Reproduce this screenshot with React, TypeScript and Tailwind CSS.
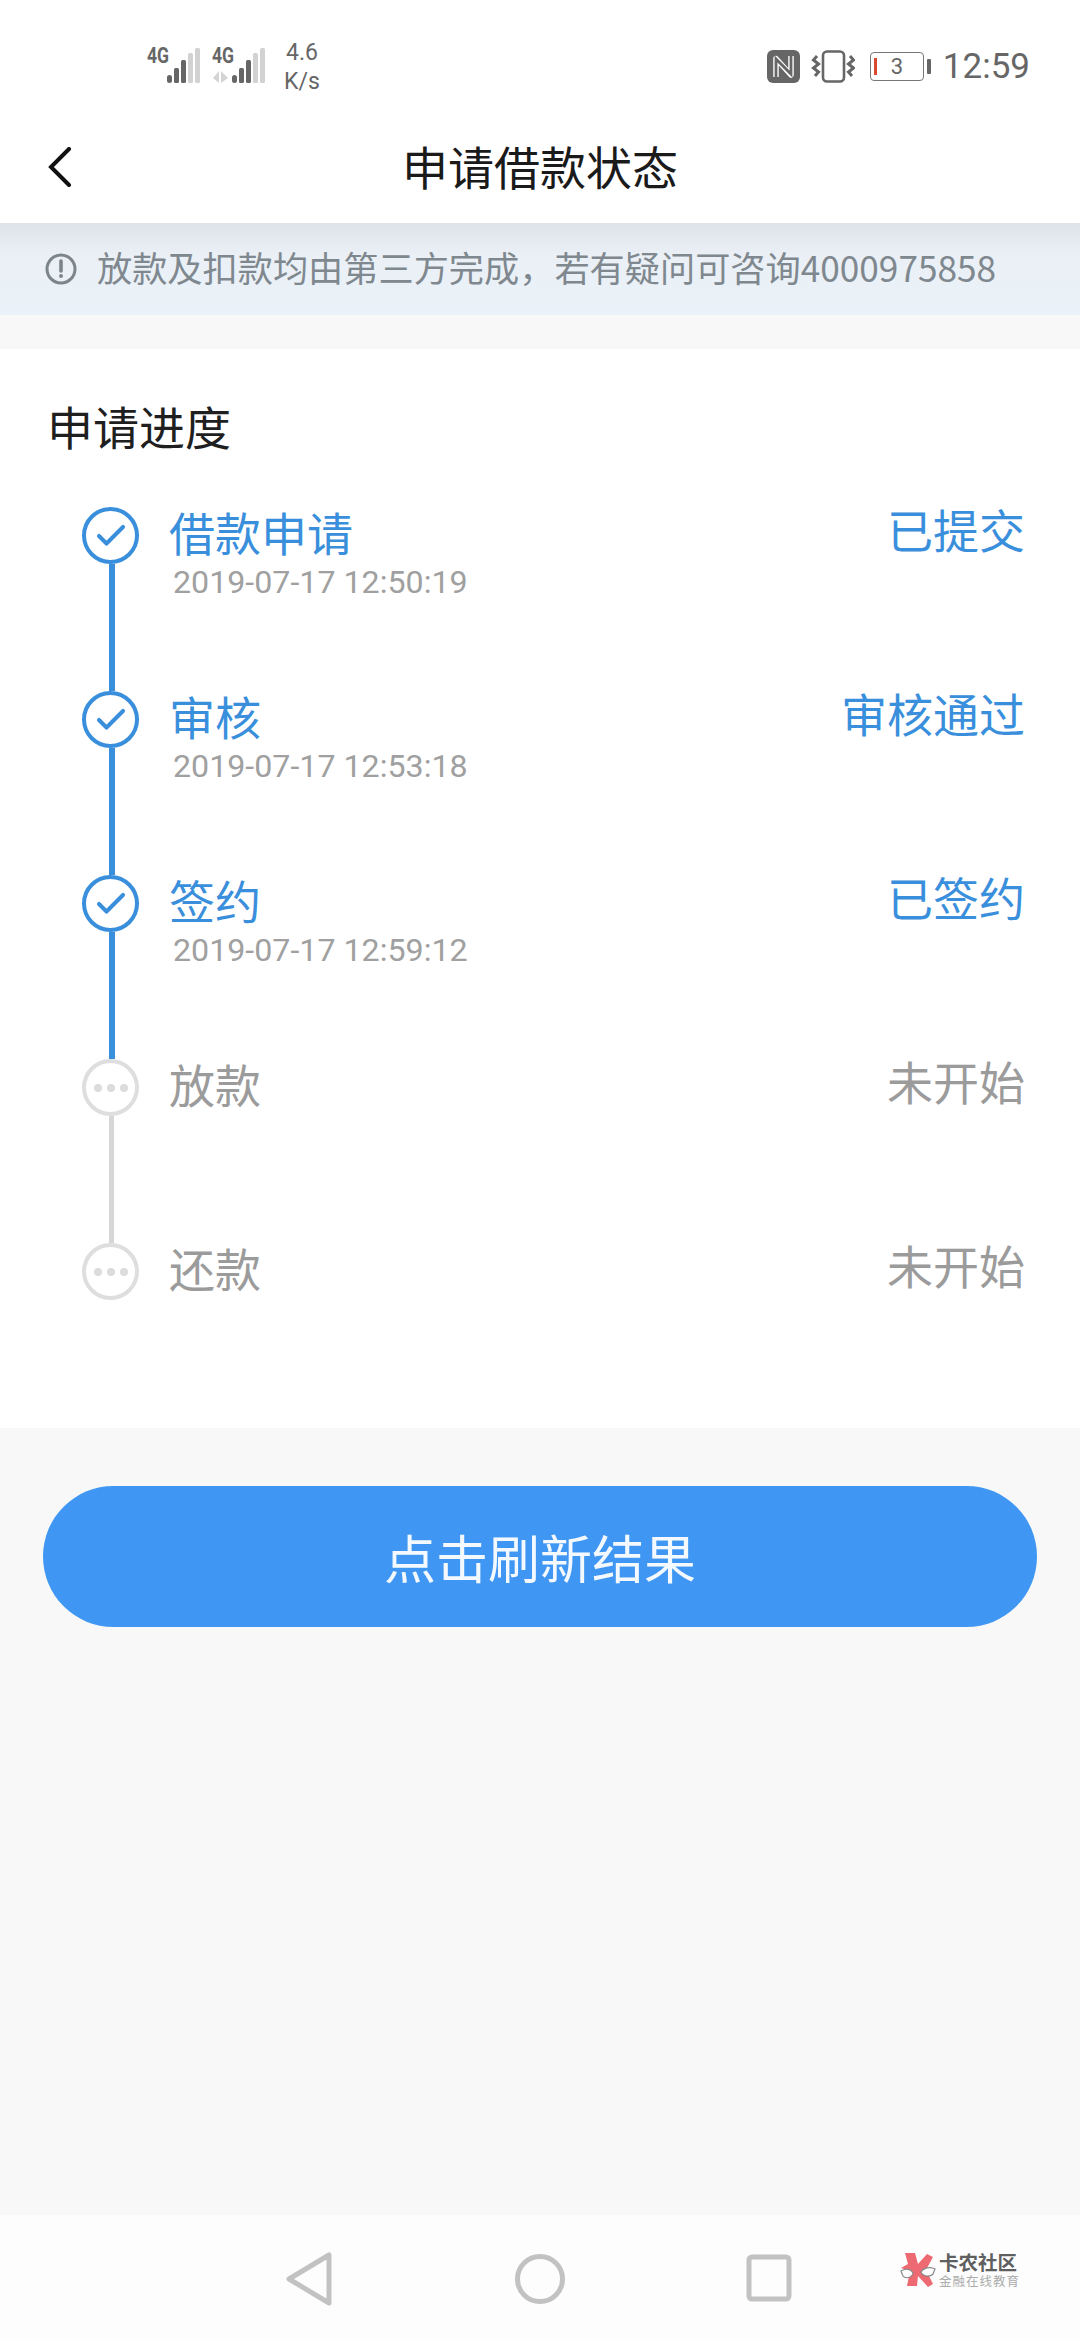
import { Check } from "lucide-react";

const CJK = "font-['Noto_Sans_CJK_SC','Noto_Sans',sans-serif]";

const STEPS = [
  { title: "借款申请", time: "2019-07-17 12:50:19", status: "已提交", done: true, lineDone: true },
  { title: "审核", time: "2019-07-17 12:53:18", status: "审核通过", done: true, lineDone: true },
  { title: "签约", time: "2019-07-17 12:59:12", status: "已签约", done: true, lineDone: true },
  { title: "放款", time: "", status: "未开始", done: false, lineDone: false },
  { title: "还款", time: "", status: "未开始", done: false, lineDone: false },
];

function Signal({ arrows = false }: { arrows?: boolean }) {
  return (
    <div className="relative flex h-[36px] items-end">
      <span className="absolute left-0 top-[-1px] origin-top-left scale-x-[0.8] font-['Roboto',sans-serif] text-[22px] font-bold leading-[20px] text-[#666666]">
        4G
      </span>
      <svg width="54" height="36" viewBox="0 0 54 36">
        {arrows && <path d="M1 31l6-7v12zM9 24l7 7-7 5z" fill="#d4d4d4" />}
        <rect x="20" y="28" width="5" height="8" rx="2.5" fill="#666" />
        <rect x="27" y="21" width="5" height="15" rx="1.5" fill="#666" />
        <rect x="34" y="13" width="5" height="23" rx="1.5" fill="#666" />
        <rect x="41" y="6" width="5" height="30" rx="1.5" fill="#d2d2d2" />
        <rect x="48" y="1" width="5" height="35" rx="1.5" fill="#d2d2d2" />
      </svg>
    </div>
  );
}

function StatusBar() {
  return (
    <div className="flex h-[120px] items-start justify-between bg-white pl-[147px] pr-[50px] pt-[38px]">
      <div className="flex items-start gap-[11px] pt-[9px]">
        <Signal />
        <Signal arrows />
        <div className="ml-[7px] mt-[-9px] flex w-[36px] flex-col items-center font-['Roboto',sans-serif] text-[23px] leading-[29px] text-[#666666]">
          <span>4.6</span>
          <span>K/s</span>
        </div>
      </div>
      <div className="flex items-center pt-[11px]">
        <svg width="33" height="33" viewBox="0 0 33 33" className="mr-[11px]">
          <rect width="33" height="33" rx="6" fill="#666" />
          <path d="M9 27V8.500L24 25V6" fill="none" stroke="#fff" strokeWidth="5.500" strokeLinejoin="round" />
          <path d="M9 29V9L24 24V4" fill="none" stroke="#666" strokeWidth="2.800" />
        </svg>
        <svg width="44" height="33" viewBox="0 0 44 33" className="mr-[15px]">
          <rect x="12" y="1.500" width="21" height="30" rx="4" fill="none" stroke="#666" strokeWidth="2.600" />
          <path d="M6 6L2.500 10l5 4-5 4 5 4-3.500 4M39 6l3.500 4-5 4 5 4-5 4 3.500 4" fill="none" stroke="#666" strokeWidth="3" />
        </svg>
        <div className="relative flex h-[29px] w-[54px] items-center justify-center rounded-[4px] border-[1.5px] border-[#777777] font-['Roboto',sans-serif] text-[22px] leading-none text-[#666666]">
          <span className="absolute left-[3px] top-[5px] h-[17px] w-[3px] bg-[#d9492f]" />
          3
        </div>
        <span className="ml-[3px] mr-[12px] h-[15px] w-[4px] rounded-[1px] bg-[#666666]" />
        <span className="font-['Roboto',sans-serif] text-[35px] leading-none text-[#666666]">12:59</span>
      </div>
    </div>
  );
}

function StepIcon({ done }: { done: boolean }) {
  if (done) {
    return (
      <div className="flex h-[57px] w-[57px] shrink-0 items-center justify-center rounded-full border-[4px] border-[#3a8fdc] bg-white">
        <Check size={36} strokeWidth={2.700} color="#3a8fdc" />
      </div>
    );
  }
  return (
    <div className="flex h-[57px] w-[57px] shrink-0 items-center justify-center gap-[5px] rounded-full border-[4px] border-[#dedede] bg-white">
      <span className="h-[8px] w-[8px] rounded-full bg-[#dcdcdc]" />
      <span className="h-[8px] w-[8px] rounded-full bg-[#dcdcdc]" />
      <span className="h-[8px] w-[8px] rounded-full bg-[#dcdcdc]" />
    </div>
  );
}

export default function App() {
  return (
    <div className={`flex h-[2340px] w-[1080px] flex-col overflow-hidden bg-[#f8f8f8] ${CJK}`}>
      <StatusBar />

      <div className="flex h-[103px] items-center justify-center bg-white">
        <svg width="24" height="40" viewBox="0 0 24 40" className="absolute left-[48px] top-[147px]">
          <path d="M21 2L3 20l18 18" fill="none" stroke="#111" strokeWidth="4" strokeLinecap="round" />
        </svg>
        <h1 className="mt-[-14px] text-[46px] font-normal leading-none text-[#1a1a1a]">申请借款状态</h1>
      </div>

      <div className="flex h-[92px] items-center bg-gradient-to-b from-[#dfe3e8] via-[#eaf0f6] via-[35%] to-[#eaf1f8] pl-[45px]">
        <svg width="32" height="32" viewBox="0 0 32 32">
          <circle cx="16" cy="16" r="14" fill="none" stroke="#7c848c" strokeWidth="3" />
          <path d="M16 8v10" stroke="#7c848c" strokeWidth="3.600" strokeLinecap="round" />
          <circle cx="16" cy="23" r="2" fill="#7c848c" />
        </svg>
        <p className="ml-[20px] mt-[-5px] text-[35.200px] leading-none text-[#80888f]">放款及扣款均由第三方完成，若有疑问可咨询4000975858</p>
      </div>

      <section className="mt-[34px] flex h-[1079px] flex-col bg-white pl-[49px] pr-[55px] pt-[53px]">
        <h2 className="ml-[-2px] text-[46px] font-normal leading-[46px] text-[#1f1f1f]">申请进度</h2>
        <div className="mt-[59px] pl-[33px]">
          {STEPS.map((step, i) => (
            <div key={step.title} className="flex h-[184px]">
              <div className="flex w-[57px] shrink-0 flex-col">
                <StepIcon done={step.done} />
                {i < STEPS.length - 1 && (
                  <div className={`ml-[27px] flex-1 ${step.lineDone ? "w-[6px] bg-[#3a8fdc]" : "w-[5px] bg-[#d6d6d6]"}`} />
                )}
              </div>
              <div className="ml-[30px] flex-1">
                <div className="flex items-start justify-between">
                  <span className={`mt-[-4px] text-[46px] leading-[56px] ${step.done ? "text-[#3a8fdc]" : "text-[#9b9b9b]"}`}>
                    {step.title}
                  </span>
                  <span className={`mt-[-7px] text-[46px] leading-[56px] ${step.done ? "text-[#3a8fdc]" : "text-[#9b9b9b]"}`}>
                    {step.status}
                  </span>
                </div>
                {step.time && (
                  <p className="ml-[4px] mt-[5px] font-['Roboto',sans-serif] text-[32.200px] leading-[36px] text-[#a0a0a0]">{step.time}</p>
                )}
              </div>
            </div>
          ))}
        </div>
      </section>

      <button className="mx-[43px] mt-[58px] h-[141px] rounded-full bg-[#3f97f3] text-[52px] leading-none text-[#f4f9ff]">
        点击刷新结果
      </button>

      <div className="flex-1" />

      <div className="relative flex h-[125px] items-center justify-center bg-[#fdfdfd]">
        <svg width="560" height="56" viewBox="0 0 560 56" className="mt-[2px]">
          <path d="M29 28L69 4v48z" fill="none" stroke="#c2c2c2" strokeWidth="5" strokeLinejoin="round" />
          <circle cx="280" cy="28" r="22.500" fill="none" stroke="#c2c2c2" strokeWidth="5" />
          <rect x="489" y="6" width="40" height="42" rx="3" fill="none" stroke="#c2c2c2" strokeWidth="5" />
        </svg>
        <div className="absolute left-[900px] top-[36px] flex items-center">
          <svg width="36" height="36" viewBox="0 0 36 36">
            <path d="M5 1h10l3 11 9-10 6 3-7 13 7 14-5 3-10-11-1 10H7l3-15-9-3 7-4z" fill="#ee6a72" />
            <path d="M1 19c5-3 10-2 12 2-1 5-8 6-10 3zM35 17c-5-3-12-1-14 3 2 5 9 5 12 2z" fill="#fff" stroke="#888" strokeWidth="1.200" />
          </svg>
          <div className="ml-[3px] flex flex-col">
            <span className="text-[19.500px] font-bold leading-[22px] text-[#5f5f5f]">卡农社区</span>
            <span className="text-[12.500px] leading-[15px] tracking-[1px] text-[#ababab]">金融在线教育</span>
          </div>
        </div>
      </div>
    </div>
  );
}
